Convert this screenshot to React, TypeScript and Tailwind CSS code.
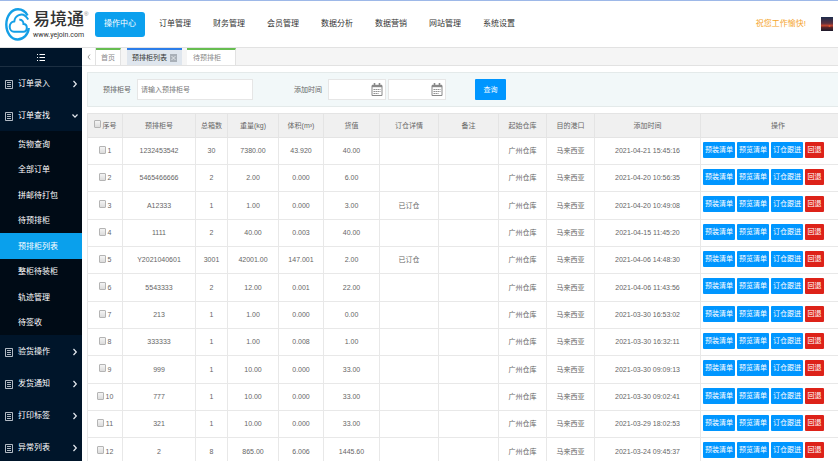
import React from "react";

const navItems = ["订单管理", "财务管理", "会员管理", "数据分析", "数据营销", "网站管理", "系统设置"];

const subItems = ["货物查询", "全部订单", "拼邮待打包", "待预排柜", "预排柜列表", "整柜待装柜", "轨迹管理", "待签收"];

const columns = [
  { title: "预排柜号", width: "w-[73px]" },
  { title: "总箱数", width: "w-[32px]" },
  { title: "重量(kg)", width: "w-[51px]" },
  { title: "体积(m³)", width: "w-[45px]" },
  { title: "货值", width: "w-[56px]" },
  { title: "订仓详情", width: "w-[59px]" },
  { title: "备注", width: "w-[60px]" },
  { title: "起始仓库", width: "w-[48px]" },
  { title: "目的港口", width: "w-[48px]" },
  { title: "添加时间", width: "w-[106px]" },
  { title: "操作", width: "w-auto" },
];

const rows = [
  ["1232453542", "30", "7380.00", "43.920", "40.00", "", "2021-04-21 15:45:16"],
  ["5465466666", "2", "2.00", "0.000", "6.00", "", "2021-04-20 10:56:35"],
  ["A12333", "1", "1.00", "0.000", "3.00", "已订仓", "2021-04-20 10:49:08"],
  ["1111", "2", "40.00", "0.003", "40.00", "", "2021-04-15 11:45:20"],
  ["Y2021040601", "3001", "42001.00", "147.001", "2.00", "已订仓", "2021-04-06 14:48:30"],
  ["5543333", "2", "12.00", "0.001", "22.00", "", "2021-04-06 11:43:56"],
  ["213", "1", "1.00", "0.000", "0.00", "", "2021-03-30 16:53:02"],
  ["333333", "1", "1.00", "0.008", "1.00", "", "2021-03-30 16:32:11"],
  ["999", "1", "10.00", "0.000", "33.00", "", "2021-03-30 09:09:13"],
  ["777", "1", "10.00", "0.000", "33.00", "", "2021-03-30 09:02:41"],
  ["321", "1", "10.00", "0.000", "33.00", "", "2021-03-29 18:02:53"],
  ["2", "8", "865.00", "6.006", "1445.60", "", "2021-03-24 09:45:37"],
];

function Logo() {
  return (
    <svg viewBox="0 0 25 33" className="h-[33px] w-[25px] shrink-0" fill="none" aria-hidden="true">
      <path
        d="M22.500 7.500C20.500 3.600 17 1.300 13 1.300C6.400 1.300 1.300 8 1.300 16.500C1.300 25 6.400 31.500 12.700 31.500C18.500 31.500 23.300 26.500 23.700 20"
        stroke="#149fe6"
        strokeWidth="2.400"
      />
      <path
        d="M23.200 11.500C20.500 6.800 16.800 5.700 13.700 7.200C10.800 8.500 9.600 11 9.300 13.400C6.500 13.600 4.700 16 4.700 18.800C4.700 21.800 6.800 23.800 9 23.800H18.500C20.500 23.800 21.800 22 21.800 19.800C21.800 17.500 20.300 16 18.500 16C18.500 13.500 17 11.500 14.300 11.800"
        stroke="#149fe6"
        strokeWidth="2"
      />
    </svg>
  );
}

function DocIcon() {
  return (
    <svg viewBox="0 0 8 9" className="h-[9px] w-[8px] shrink-0" fill="none" stroke="#dfe5ec" aria-hidden="true">
      <path d="M.5 .5h7v8h-7zM2 2.500h4M2 4.500h4M2 6.500h4" strokeWidth=".8" />
    </svg>
  );
}

function CalendarIcon() {
  return (
    <svg viewBox="0 0 12 13" className="h-[13px] w-[12px]" fill="none" stroke="#888" aria-hidden="true">
      <path d="M1 2.500h10v10H1z" strokeWidth="1" />
      <path d="M1 3h10" strokeWidth="2.400" />
      <path d="M3.500 0v2.500M8.500 0v2.500" strokeWidth="1.600" />
      <path d="M2.500 6.500h7M2.500 8.500h7M2.500 10.500h5" strokeWidth="1.200" strokeDasharray="1.400 .6" />
    </svg>
  );
}

function MenuGroup({ label, open }: { label: string; open?: boolean }) {
  return (
    <button type="button" aria-expanded={!!open} className="flex h-8 w-full items-center pl-[5px] pr-[4px] pt-[2px] text-[8px] text-white">
      <DocIcon />
      <span className="ml-[5px] flex-1 text-left">{label}</span>
      <svg viewBox="0 0 6 8" className="h-[8px] w-[6px]" fill="none" stroke="#e5eaf0" strokeWidth="1.200" aria-hidden="true">
        {open ? <path d="M.5 2.500L3 5.200L5.500 2.500" /> : <path d="M1.500 1L4.300 4L1.500 7" />}
      </svg>
    </button>
  );
}

function Check({ label }: { label: string }) {
  return (
    <label className="flex items-center justify-center gap-[2px]">
      <input
        type="checkbox"
        className="mb-[3px] h-[8px] w-[7px] appearance-none rounded-[1px] border border-[#b4b4b4] bg-linear-to-b from-[#f4f4f4] to-[#dcdcdc] checked:bg-[#0096ff]"
      />
      <span>{label}</span>
    </label>
  );
}

function DateField({ label }: { label: string }) {
  return (
    <div className="flex h-[21px] w-[58px] items-center border border-[#e6e6e6] bg-white pr-[2px]">
      <input type="text" aria-label={label} className="h-full w-0 flex-1 pl-1 outline-none" />
      <CalendarIcon />
    </div>
  );
}

export default function App() {
  return (
    <div className="flex h-screen flex-col overflow-hidden border-t border-[#9db8e8] bg-white font-['Liberation_Sans','Noto_Sans_CJK_SC',sans-serif] text-[8px] leading-[12px] text-[#666]">
      <header className="flex h-[47px] shrink-0 items-center border-b border-[#e2e2e2] pr-[5px]">
        <a href="#" className="flex w-[95px] shrink-0 items-center pl-[5px]">
          <Logo />
          <span className="ml-[3px] flex flex-col pt-[2px] text-[#333]">
            <span className="flex text-[17px] font-medium leading-[20px]">
              易境通<sup className="top-0 text-[6px] leading-[8px] text-[#888]">®</sup>
            </span>
            <span className="font-['Roboto',sans-serif] text-[7px] leading-[10px]">www.yejoin.com</span>
          </span>
        </a>
        <nav className="flex items-center gap-[22px] whitespace-nowrap text-[#333]">
          <a href="#" className="mr-[-8px] flex h-[25px] w-[50px] items-center justify-center rounded-[3px] bg-[#0ba0ee] text-white">
            操作中心
          </a>
          {navItems.map((item) => (
            <a key={item} href="#">
              {item}
            </a>
          ))}
        </nav>
        <span className="ml-auto text-[#f5a52c]">祝您工作愉快!</span>
        <svg viewBox="0 0 12 14" className="ml-[15px] h-[14px] w-[12px]" role="img" aria-label="头像">
          <defs>
            <linearGradient id="dusk" x1="0" y1="0" x2="0" y2="1">
              <stop offset="0" stopColor="#1c2c4c" />
              <stop offset=".45" stopColor="#5b3140" />
              <stop offset=".62" stopColor="#c2452f" />
              <stop offset=".75" stopColor="#5a2428" />
              <stop offset="1" stopColor="#1a1a2c" />
            </linearGradient>
          </defs>
          <rect width="12" height="14" fill="url(#dusk)" />
          <circle cx="8.500" cy="9" r="1" fill="#e2572f" />
        </svg>
      </header>

      <div className="flex min-h-0 flex-1">
        <aside className="w-[82px] shrink-0 overflow-hidden bg-[#00152a]">
          <button type="button" aria-label="菜单" className="flex h-[19px] w-full items-center justify-center border-b border-[#1c2f42]">
            <svg viewBox="0 0 8 9" className="h-[9px] w-[8px]" stroke="#fff" strokeWidth="1" aria-hidden="true">
              <path d="M0 1.500h1M2.500 1.500H8M0 4.500h1M2.500 4.500H8M0 7.500h1M2.500 7.500H8" />
            </svg>
          </button>
          <MenuGroup label="订单录入" />
          <MenuGroup label="订单查找" open />
          <ul className="bg-[#000b16] text-white">
            {subItems.map((item) => (
              <li key={item} className="odd:h-[26px] even:h-[25px]">
                <a
                  href="#"
                  className={
                    item === "预排柜列表"
                      ? "flex h-full items-center bg-[#0aa0ec] pl-[18px] pt-px"
                      : "flex h-full items-center pl-[18px] pt-px"
                  }
                >
                  {item}
                </a>
              </li>
            ))}
          </ul>
          <MenuGroup label="验货操作" />
          <MenuGroup label="发货通知" />
          <MenuGroup label="打印标签" />
          <MenuGroup label="异常列表" />
        </aside>

        <main className="min-w-0 flex-1 overflow-hidden text-[7px]">
          <div className="flex h-[18px] items-stretch border-b border-[#e2e2e2] bg-[#f5f5f5] text-[#888]">
            <button type="button" aria-label="向左" className="flex w-[14px] items-center justify-center border-r border-[#e2e2e2] bg-white">
              <svg viewBox="0 0 4 6" className="h-[6px] w-[4px]" fill="none" stroke="#888" strokeWidth=".8" aria-hidden="true">
                <path d="M3 .5L1 3L3 5.500" />
              </svg>
            </button>
            <a href="#" className="flex w-[25px] items-center justify-center border-t-2 border-r border-t-[#66bd50] border-r-[#e2e2e2] bg-white">
              首页
            </a>
            <a href="#" className="ml-[6px] flex w-[55px] items-center justify-center gap-[3px] border-t-2 border-t-[#2b7de9] bg-[#dfe6ee] text-[#333]">
              预排柜列表
              <svg viewBox="0 0 7 8" className="h-[8px] w-[7px]" aria-hidden="true">
                <rect width="7" height="8" fill="#a9b0b8" />
                <path d="M1.500 2L5.500 6M5.500 2L1.500 6" stroke="#eef1f4" strokeWidth=".8" />
              </svg>
            </a>
            <a href="#" className="ml-[5px] flex w-[49px] items-center border-t-2 border-r border-t-[#66bd50] border-r-[#e2e2e2] bg-white pl-[6px]">
              待预排柜
            </a>
          </div>

          <form className="ml-[5px] mt-[6px] flex h-[35px] items-center border border-r-0 border-[#e4eaea] bg-[#f2f8f9]" onSubmit={(e) => e.preventDefault()}>
            <label htmlFor="cabinet" className="ml-[15px] w-[34px]">
              预排柜号
            </label>
            <input
              id="cabinet"
              type="text"
              placeholder="请输入预排柜号"
              className="h-[21px] w-[116px] border border-[#e6e6e6] bg-white pl-[3px] outline-none placeholder:text-[#777]"
            />
            <span className="ml-[41px] w-[34px]">添加时间</span>
            <DateField label="开始时间" />
            <span className="w-[2px]" />
            <DateField label="结束时间" />
            <button type="submit" className="ml-[29px] h-[21px] w-[31px] rounded-[1px] bg-[#0096ff] text-white">
              查询
            </button>
          </form>

          <div className="ml-[5px] mt-[6px] overflow-hidden">
            <table className="w-full min-w-[769px] table-fixed border-collapse text-center">
              <thead>
                <tr className="h-[24px] bg-[#f0f0f0]">
                  <th className="w-[35px] border border-[#e4e4e4] p-0 font-normal">
                    <Check label="序号" />
                  </th>
                  {columns.map((c) => (
                    <th key={c.title} className={`${c.width} whitespace-nowrap border border-[#e4e4e4] p-0 font-normal`}>
                      {c.title}
                    </th>
                  ))}
                </tr>
              </thead>
              <tbody>
                {rows.map(([no, boxes, weight, volume, value, detail, time], i) => (
                  <tr key={no} className="h-[27px] nth-[3n]:h-[28px] [&>td]:border [&>td]:border-[#e8e8e8] [&>td]:p-0">
                    <td>
                      <Check label={String(i + 1)} />
                    </td>
                    <td>{no}</td>
                    <td>{boxes}</td>
                    <td>{weight}</td>
                    <td>{volume}</td>
                    <td>{value}</td>
                    <td>{detail}</td>
                    <td />
                    <td>广州仓库</td>
                    <td>马来西亚</td>
                    <td>{time}</td>
                    <td>
                      <div className="mb-[3px] ml-[2px] flex gap-[2px] text-white">
                        <button type="button" className="h-[16px] w-[32px] rounded-[1px] bg-[#0096ff]">预装清单</button>
                        <button type="button" className="h-[16px] w-[32px] rounded-[1px] bg-[#0096ff]">预览清单</button>
                        <button type="button" className="h-[16px] w-[32px] rounded-[1px] bg-[#0096ff]">订仓跟进</button>
                        <button type="button" className="h-[16px] w-[19px] rounded-[1px] bg-[#dd2219]">回退</button>
                      </div>
                    </td>
                  </tr>
                ))}
              </tbody>
            </table>
          </div>
        </main>
      </div>
    </div>
  );
}
